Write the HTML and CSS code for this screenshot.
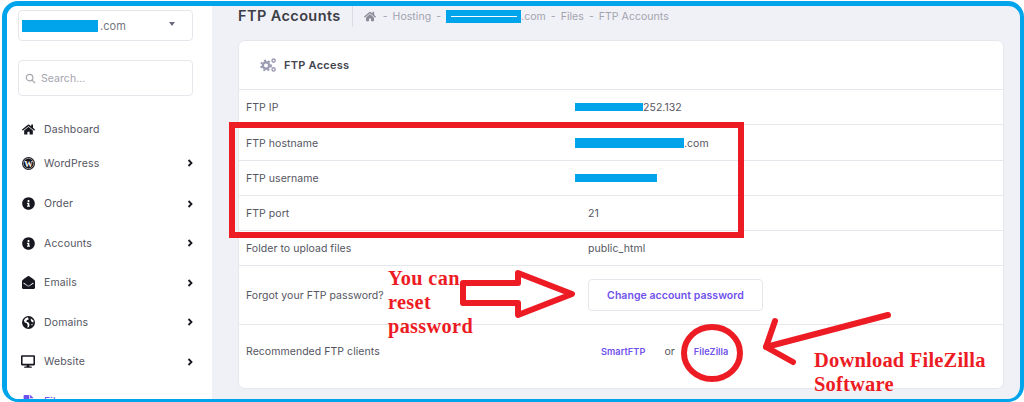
FILE: index.html
```html
<!DOCTYPE html>
<html lang="en">
<head>
  <meta charset="UTF-8">
  <meta name="viewport" content="width=device-width, initial-scale=1.0">
  <title>FTP Accounts</title>
  <link rel="stylesheet" href="styles.css">
</head>
<body>
  <div class="frame">
    <aside class="sidebar">
      <div class="domain-select">
        <span class="domain-name"><span class="redact redact-domain"></span>.com</span>
        <span class="caret"></span>
      </div>

      <div class="search-box">
        <svg class="search-icon" viewBox="0 0 12 12"><circle cx="5" cy="5" r="3.6"/><line x1="7.7" y1="7.7" x2="11" y2="11"/></svg>
        <span>Search...</span>
      </div>

      <nav class="nav">
        <a class="nav-item nav-compact">
          <svg class="nav-icon" viewBox="0 0 576 512"><path d="M280.37 148.26L96 300.11V464a16 16 0 0 0 16 16l112.06-.29a16 16 0 0 0 15.92-16V368a16 16 0 0 1 16-16h64a16 16 0 0 1 16 16v95.64a16 16 0 0 0 16 16.05L464 480a16 16 0 0 0 16-16V300L295.67 148.26a12.19 12.19 0 0 0-15.3 0zM571.6 251.47L488 182.56V44.05a12 12 0 0 0-12-12h-56a12 12 0 0 0-12 12v72.61L318.47 43a48 48 0 0 0-61 0L4.34 251.47a12 12 0 0 0-1.6 16.9l25.5 31A12 12 0 0 0 45.15 301l235.22-193.74a12.19 12.19 0 0 1 15.3 0L530.9 301a12 12 0 0 0 16.9-1.6l25.5-31a12 12 0 0 0-1.7-16.93z"/></svg>
          <span class="nav-label">Dashboard</span>
        </a>
        <a class="nav-item nav-compact nav-gap">
          <svg class="nav-icon" viewBox="0 0 24 24"><circle cx="12" cy="12" r="12"/><circle class="wp-ring" cx="12" cy="12" r="9.6"/><text class="wp-mark" x="12" y="18" text-anchor="middle">W</text></svg>
          <span class="nav-label">WordPress</span>
          <svg class="chevron" viewBox="0 0 8 10"><polyline points="2,1 6,5 2,9"/></svg>
        </a>
        <a class="nav-item">
          <svg class="nav-icon" viewBox="0 0 512 512"><path d="M256 8C119.043 8 8 119.083 8 256c0 136.997 111.043 248 248 248s248-111.003 248-248C504 119.083 392.957 8 256 8zm0 110c23.196 0 42 18.804 42 42s-18.804 42-42 42-42-18.804-42-42 18.804-42 42-42zm56 254c0 6.627-5.373 12-12 12h-88c-6.627 0-12-5.373-12-12v-24c0-6.627 5.373-12 12-12h12v-64h-12c-6.627 0-12-5.373-12-12v-24c0-6.627 5.373-12 12-12h64c6.627 0 12 5.373 12 12v100h12c6.627 0 12 5.373 12 12v24z"/></svg>
          <span class="nav-label">Order</span>
          <svg class="chevron" viewBox="0 0 8 10"><polyline points="2,1 6,5 2,9"/></svg>
        </a>
        <a class="nav-item">
          <svg class="nav-icon" viewBox="0 0 512 512"><path d="M256 8C119.043 8 8 119.083 8 256c0 136.997 111.043 248 248 248s248-111.003 248-248C504 119.083 392.957 8 256 8zm0 110c23.196 0 42 18.804 42 42s-18.804 42-42 42-42-18.804-42-42 18.804-42 42-42zm56 254c0 6.627-5.373 12-12 12h-88c-6.627 0-12-5.373-12-12v-24c0-6.627 5.373-12 12-12h12v-64h-12c-6.627 0-12-5.373-12-12v-24c0-6.627 5.373-12 12-12h64c6.627 0 12 5.373 12 12v100h12c6.627 0 12 5.373 12 12v24z"/></svg>
          <span class="nav-label">Accounts</span>
          <svg class="chevron" viewBox="0 0 8 10"><polyline points="2,1 6,5 2,9"/></svg>
        </a>
        <a class="nav-item">
          <svg class="nav-icon" viewBox="0 0 512 512"><path d="M512 464c0 26.51-21.49 48-48 48H48c-26.51 0-48-21.49-48-48V200.724a48 48 0 0 1 18.387-37.776c24.913-19.529 45.501-35.365 164.2-121.511C199.412 29.17 232.797-.347 256 .003c23.198-.354 56.596 29.172 73.413 41.433 118.687 86.137 139.303 101.995 164.2 121.512A48 48 0 0 1 512 200.724V464zm-65.666-196.605c-2.563-3.728-7.7-4.595-11.339-1.907-22.845 16.873-55.462 40.705-105.582 77.079-16.825 12.266-50.21 41.781-73.413 41.43-23.211.344-56.559-29.143-73.413-41.43-50.114-36.37-82.734-60.204-105.582-77.079-3.639-2.688-8.776-1.821-11.339 1.907l-9.072 13.196a7.998 7.998 0 0 0 1.839 10.967c22.887 16.899 55.454 40.69 105.303 76.868 20.274 14.781 56.524 47.813 92.264 47.573 35.724.242 71.961-32.771 92.263-47.573 49.85-36.179 82.418-59.97 105.303-76.868a7.998 7.998 0 0 0 1.839-10.967l-9.071-13.196z"/></svg>
          <span class="nav-label">Emails</span>
          <svg class="chevron" viewBox="0 0 8 10"><polyline points="2,1 6,5 2,9"/></svg>
        </a>
        <a class="nav-item">
          <svg class="nav-icon" viewBox="0 0 24 24"><circle cx="12" cy="12" r="12"/><path class="globe-land" d="M11 2.5 L7 3.8 L3.5 8 L5 12 L9 13.5 L10.5 17 L10 21.5 L13 20 L14 15 L11.5 11.5 L8 10.5 L9 7.5 L12.5 6.5 Z"/><path class="globe-land" d="M16 4 L20.5 8 L21.5 12 L18 11 L16.5 8 Z"/><path class="globe-land" d="M17 15 L20 14.5 L18.5 18 Z"/></svg>
          <span class="nav-label">Domains</span>
          <svg class="chevron" viewBox="0 0 8 10"><polyline points="2,1 6,5 2,9"/></svg>
        </a>
        <a class="nav-item">
          <svg class="nav-icon nav-icon-wide" viewBox="0 0 576 512"><path d="M528 0H48C21.5 0 0 21.5 0 48v320c0 26.5 21.5 48 48 48h192l-16 48h-72c-13.3 0-24 10.7-24 24s10.7 24 24 24h272c13.3 0 24-10.7 24-24s-10.7-24-24-24h-72l-16-48h192c26.5 0 48-21.5 48-48V48c0-26.5-21.5-48-48-48zm-16 352H64V64h448v288z"/></svg>
          <span class="nav-label">Website</span>
          <svg class="chevron" viewBox="0 0 8 10"><polyline points="2,1 6,5 2,9"/></svg>
        </a>
        <a class="nav-item nav-active">
          <svg class="nav-icon" viewBox="0 0 384 512"><path d="M224 136V0H24C10.7 0 0 10.7 0 24v464c0 13.3 10.7 24 24 24h336c13.3 0 24-10.7 24-24V160H248c-13.2 0-24-10.800-24-24zM384 121.900v6.100H256V0h6.100c6.400 0 12.500 2.500 17 7l97.900 98c4.500 4.500 7 10.600 7 16.900z"/></svg>
          <span class="nav-label">Files</span>
          <svg class="chevron" viewBox="0 0 8 10"><polyline points="1,3 4,7 7,3"/></svg>
        </a>
      </nav>
    </aside>

    <main class="content">
      <header class="page-head">
        <h1>FTP Accounts</h1>
        <div class="crumbs">
          <svg class="crumb-home" viewBox="0 0 576 512"><path d="M280.37 148.26L96 300.11V464a16 16 0 0 0 16 16l112.06-.29a16 16 0 0 0 15.92-16V368a16 16 0 0 1 16-16h64a16 16 0 0 1 16 16v95.64a16 16 0 0 0 16 16.05L464 480a16 16 0 0 0 16-16V300L295.67 148.26a12.19 12.19 0 0 0-15.3 0zM571.6 251.47L488 182.56V44.05a12 12 0 0 0-12-12h-56a12 12 0 0 0-12 12v72.61L318.47 43a48 48 0 0 0-61 0L4.34 251.47a12 12 0 0 0-1.6 16.9l25.5 31A12 12 0 0 0 45.15 301l235.22-193.74a12.19 12.19 0 0 1 15.3 0L530.9 301a12 12 0 0 0 16.9-1.6l25.5-31a12 12 0 0 0-1.7-16.93z"/></svg>
          <span>-</span>
          <span>Hosting</span>
          <span>-</span>
          <span class="crumb-domain"><span class="redact redact-crumb"></span>.com</span>
          <span>-</span>
          <span>Files</span>
          <span>-</span>
          <span>FTP Accounts</span>
        </div>
      </header>

      <section class="card">
        <div class="card-head">
          <svg class="gears" viewBox="0 0 16 14">
            <circle class="gear-hub" cx="6" cy="7.5" r="3.2"/>
            <circle class="gear-teeth" cx="6" cy="7.5" r="5"/>
            <circle class="gear-small" cx="13.6" cy="2.6" r="1.6"/>
            <circle class="gear-small" cx="13.6" cy="11.4" r="1.6"/>
          </svg>
          <h2>FTP Access</h2>
        </div>

        <div class="row">
          <span>FTP IP</span>
          <span class="value"><span class="redact redact-ip"></span>252.132</span>
        </div>
        <div class="row row-tall">
          <span>FTP hostname</span>
          <span class="value"><span class="redact redact-host"></span>.com</span>
        </div>
        <div class="row">
          <span>FTP username</span>
          <span class="value"><span class="redact redact-user"></span></span>
        </div>
        <div class="row">
          <span>FTP port</span>
          <span class="value value-indent">21</span>
        </div>
        <div class="row">
          <span>Folder to upload files</span>
          <span class="value value-indent">public_html</span>
        </div>
        <div class="row row-action">
          <span>Forgot your FTP password?</span>
          <span class="value value-indent"><a class="btn-outline">Change account password</a></span>
        </div>
        <div class="row row-clients">
          <span>Recommended FTP clients</span>
          <span class="value clients"><a class="link">SmartFTP</a><span>or</span><a class="link">FileZilla</a></span>
        </div>
      </section>
    </main>

    <div class="mark-box"></div>
    <svg class="marks" viewBox="0 0 1024 402">
      <polygon points="463,283 518,283 518,273 572,294 518,315 518,303 463,303"/>
      <ellipse cx="712" cy="353" rx="28" ry="26"/>
      <polyline points="888,315 766,347"/>
      <polyline points="775,321 766,347 793,362"/>
    </svg>
    <div class="note note-reset">You can<br>reset<br>password</div>
    <div class="note note-download">Download FileZilla<br>Software</div>
  </div>
</body>
</html>
```

FILE: styles.css
```css
:root {
  --frame-blue: #00a4ea;
  --page-bg: #f0f1f6;
  --line: #e6e7ed;
  --text: #55555f;
  --muted: #a3a3ae;
  --purple: #6f52ed;
  --mark-red: #ed1c24;
}
* { box-sizing: border-box; }
html, body { margin: 0; height: 100%; background: #fff; }
body {
  padding: 1px 0 0 2px;
  overflow: hidden;
  font-family: Inter, "Noto Sans", sans-serif;
  font-size: 10.5px;
  letter-spacing: 0.05px;
  color: var(--text);
}
.frame {
  position: relative;
  display: flex;
  width: 1022px;
  height: 401px;
  border: solid var(--frame-blue);
  border-width: 5px 4px 3px 5px;
  border-radius: 16px;
  overflow: hidden;
  background: var(--page-bg);
}
.redact {
  display: inline-block;
  background: var(--frame-blue);
  vertical-align: middle;
}

/* sidebar */
.sidebar {
  flex: 0 0 205px;
  padding: 4px 19px 0 11px;
  background: #fff;
}
.domain-select {
  display: flex;
  align-items: center;
  justify-content: space-between;
  height: 31px;
  padding: 0 17px 0 3px;
  border: 1px solid var(--line);
  border-radius: 4px;
  font-size: 11px;
  color: #77777f;
}
.domain-name { display: flex; align-items: center; gap: 2px; }
.redact-domain { width: 76px; height: 12px; }
.caret {
  margin-bottom: 4px;
  border: 3.5px solid transparent;
  border-top: 4px solid #6b6b80;
  border-bottom: 0;
}
.search-box {
  display: flex;
  align-items: center;
  gap: 5px;
  height: 36px;
  margin-top: 19px;
  padding-left: 6px;
  border: 1px solid var(--line);
  border-radius: 4px;
  color: var(--muted);
}
.search-icon {
  width: 11px;
  height: 11px;
  fill: none;
  stroke: #a6a6b0;
  stroke-width: 1.3;
}
.nav { margin-top: 16px; }
.nav-item {
  display: flex;
  align-items: center;
  height: 39.5px;
  padding-left: 4px;
}
.nav-compact { height: 34px; }
.nav-gap { margin-bottom: 4px; }
.nav-icon {
  flex: 0 0 13px;
  width: 13px;
  height: 13px;
  fill: #17171f;
}
.nav-icon-wide { flex-basis: 14px; width: 14px; margin-left: -1px; }
.nav-label {
  flex: 1;
  margin-left: 9px;
  letter-spacing: 0.15px;
}
.wp-ring { fill: none; stroke: #fff; stroke-width: 0.9; }
.wp-mark {
  fill: #fff;
  font-family: "Liberation Serif", serif;
  font-size: 16px;
  font-weight: 700;
}
.globe-land { fill: #fff; }
.chevron {
  width: 6px;
  height: 8px;
  fill: none;
  stroke: #17171f;
  stroke-width: 2.4;
}
.nav-active .nav-icon { fill: var(--purple); }
.nav-active .nav-label { color: var(--purple); }
.nav-active .chevron { stroke: var(--purple); }

/* main area */
.content {
  flex: 1;
  min-width: 0;
  padding: 0 16px 0 26px;
}
.page-head {
  display: flex;
  align-items: center;
  height: 21px;
  margin-bottom: 13px;
}
.page-head h1 {
  margin: 0;
  padding-right: 11px;
  height: 21px;
  border-right: 1px solid #dcdde4;
  font-size: 14.5px;
  font-weight: 600;
  line-height: 19px;
  letter-spacing: 0.4px;
  color: #3d3d47;
}
.crumbs {
  display: flex;
  align-items: center;
  gap: 5px;
  margin-left: 11px;
  color: var(--muted);
  font-size: 10.5px;
}
.crumb-home { width: 12px; height: 11px; fill: #8d8d9a; margin-right: 2px; }
.crumb-domain { display: flex; align-items: center; }
.redact-crumb {
  width: 75px;
  height: 13px;
  background: linear-gradient(#fff, #fff) center / 66px 1px no-repeat var(--frame-blue);
}
.card {
  height: 349px;
  border: 1px solid var(--line);
  border-radius: 7px;
  background: #fff;
}
.card-head {
  display: flex;
  align-items: center;
  gap: 8px;
  height: 48px;
  padding-left: 21px;
}
.card-head h2 {
  margin: 0;
  font-size: 11px;
  font-weight: 600;
  letter-spacing: 0.25px;
  color: #44444e;
}
.gears { width: 16px; height: 14px; fill: none; stroke: #9b9bb3; }
.gear-hub { stroke-width: 2.4; }
.gear-teeth { stroke-width: 1.8; stroke-dasharray: 2 2.2; }
.gear-small { stroke-width: 1.4; }
.row {
  display: grid;
  grid-template-columns: 329px 1fr;
  align-items: center;
  height: 35px;
  padding-left: 7px;
  border-top: 1px solid var(--line);
}
.row-tall { height: 36px; padding-top: 1px; }
.row-action { height: 59px; }
.row-clients { height: 65px; padding-bottom: 11px; }
.value { display: flex; align-items: center; }
.value-indent { padding-left: 13px; }
.redact-ip { width: 68px; height: 8px; }
.redact-host { width: 109px; height: 10px; }
.redact-user { width: 82px; height: 8px; }
.btn-outline {
  display: flex;
  align-items: center;
  justify-content: center;
  width: 175px;
  height: 32px;
  border: 1px solid var(--line);
  border-radius: 4px;
  font-weight: 600;
  color: var(--purple);
}
.clients { gap: 19px; padding-left: 26px; }
.link { font-size: 9.2px; font-weight: 600; color: var(--purple); }

/* hand drawn marks over the screenshot */
.mark-box {
  position: absolute;
  left: 222px;
  top: 116px;
  width: 515px;
  height: 116px;
  border: 6px solid var(--mark-red);
}
.marks {
  position: absolute;
  left: -7px;
  top: -6px;
  width: 1024px;
  height: 402px;
  fill: none;
  stroke: var(--mark-red);
  stroke-width: 6;
  stroke-linecap: round;
  stroke-linejoin: round;
}
.note {
  position: absolute;
  font-family: "Liberation Serif", serif;
  font-weight: 700;
  color: var(--mark-red);
}
.note-reset {
  left: 381px;
  top: 260px;
  font-size: 20.3px;
  line-height: 24px;
  letter-spacing: 0.35px;
}
.note-download {
  left: 807px;
  top: 342px;
  font-size: 20.5px;
  line-height: 24px;
  letter-spacing: 0.2px;
}
```
